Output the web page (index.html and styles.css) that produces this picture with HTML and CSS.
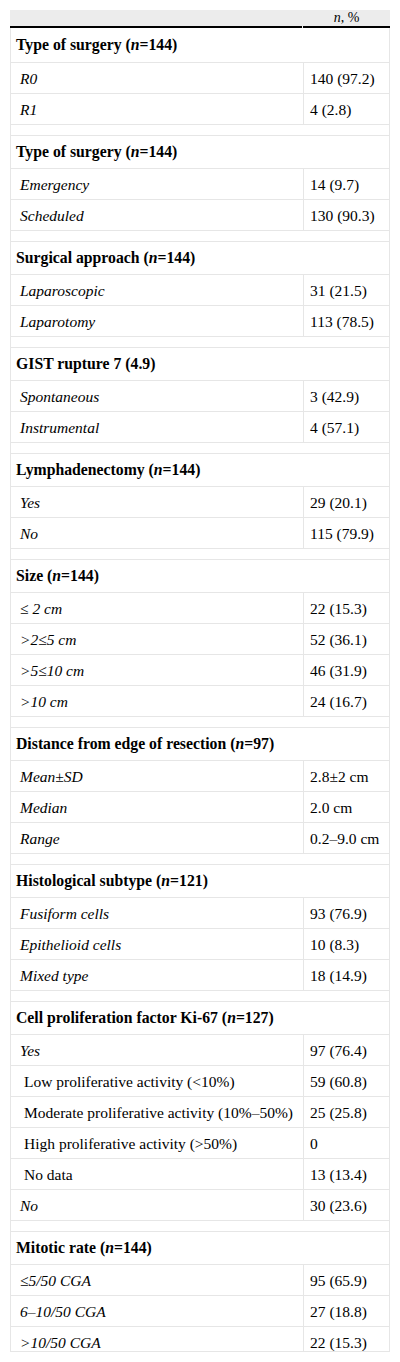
FILE: index.html
```html
<!DOCTYPE html>
<html lang="en">
<head>
<meta charset="utf-8">
<title>Surgical and histological characteristics</title>
<link rel="stylesheet" href="styles.css">
</head>
<body>
<div class="frame">
<table class="stats">
<colgroup><col class="c-label"><col class="c-value"></colgroup>
<thead>
<tr><th class="h-blank"></th><th class="h-n"><i>n</i>, %</th></tr>
</thead>
<tbody>
<tr class="group first"><td colspan="2">Type of surgery (<i>n</i>=144)</td></tr>
<tr><td class="lbl"><i>R0</i></td><td class="val">140 (97.2)</td></tr>
<tr><td class="lbl"><i>R1</i></td><td class="val">4 (2.8)</td></tr>
<tr class="gap"><td colspan="2"><div class="gap-fill"></div></td></tr>

<tr class="group"><td colspan="2">Type of surgery (<i>n</i>=144)</td></tr>
<tr><td class="lbl"><i>Emergency</i></td><td class="val">14 (9.7)</td></tr>
<tr><td class="lbl"><i>Scheduled</i></td><td class="val">130 (90.3)</td></tr>
<tr class="gap"><td colspan="2"><div class="gap-fill"></div></td></tr>

<tr class="group"><td colspan="2">Surgical approach (<i>n</i>=144)</td></tr>
<tr><td class="lbl"><i>Laparoscopic</i></td><td class="val">31 (21.5)</td></tr>
<tr><td class="lbl"><i>Laparotomy</i></td><td class="val">113 (78.5)</td></tr>
<tr class="gap"><td colspan="2"><div class="gap-fill"></div></td></tr>

<tr class="group"><td colspan="2">GIST rupture 7 (4.9)</td></tr>
<tr><td class="lbl"><i>Spontaneous</i></td><td class="val">3 (42.9)</td></tr>
<tr><td class="lbl"><i>Instrumental</i></td><td class="val">4 (57.1)</td></tr>
<tr class="gap"><td colspan="2"><div class="gap-fill"></div></td></tr>

<tr class="group"><td colspan="2">Lymphadenectomy (<i>n</i>=144)</td></tr>
<tr><td class="lbl"><i>Yes</i></td><td class="val">29 (20.1)</td></tr>
<tr><td class="lbl"><i>No</i></td><td class="val">115 (79.9)</td></tr>
<tr class="gap"><td colspan="2"><div class="gap-fill"></div></td></tr>

<tr class="group"><td colspan="2">Size (<i>n</i>=144)</td></tr>
<tr><td class="lbl"><i>≤ 2 cm</i></td><td class="val">22 (15.3)</td></tr>
<tr><td class="lbl"><i>&gt;2≤5 cm</i></td><td class="val">52 (36.1)</td></tr>
<tr><td class="lbl"><i>&gt;5≤10 cm</i></td><td class="val">46 (31.9)</td></tr>
<tr><td class="lbl"><i>&gt;10 cm</i></td><td class="val">24 (16.7)</td></tr>
<tr class="gap"><td colspan="2"><div class="gap-fill"></div></td></tr>

<tr class="group"><td colspan="2">Distance from edge of resection (<i>n</i>=97)</td></tr>
<tr><td class="lbl"><i>Mean±SD</i></td><td class="val">2.8±2 cm</td></tr>
<tr><td class="lbl"><i>Median</i></td><td class="val">2.0 cm</td></tr>
<tr><td class="lbl"><i>Range</i></td><td class="val">0.2–9.0 cm</td></tr>
<tr class="gap"><td colspan="2"><div class="gap-fill"></div></td></tr>

<tr class="group"><td colspan="2">Histological subtype (<i>n</i>=121)</td></tr>
<tr><td class="lbl"><i>Fusiform cells</i></td><td class="val">93 (76.9)</td></tr>
<tr><td class="lbl"><i>Epithelioid cells</i></td><td class="val">10 (8.3)</td></tr>
<tr><td class="lbl"><i>Mixed type</i></td><td class="val">18 (14.9)</td></tr>
<tr class="gap"><td colspan="2"><div class="gap-fill"></div></td></tr>

<tr class="group"><td colspan="2">Cell proliferation factor Ki-67 (<i>n</i>=127)</td></tr>
<tr><td class="lbl"><i>Yes</i></td><td class="val">97 (76.4)</td></tr>
<tr><td class="lbl sub">Low proliferative activity (&lt;10%)</td><td class="val">59 (60.8)</td></tr>
<tr><td class="lbl sub">Moderate proliferative activity (10%–50%)</td><td class="val">25 (25.8)</td></tr>
<tr><td class="lbl sub">High proliferative activity (&gt;50%)</td><td class="val">0</td></tr>
<tr><td class="lbl sub">No data</td><td class="val">13 (13.4)</td></tr>
<tr><td class="lbl"><i>No</i></td><td class="val">30 (23.6)</td></tr>
<tr class="gap"><td colspan="2"><div class="gap-fill"></div></td></tr>

<tr class="group"><td colspan="2">Mitotic rate (<i>n</i>=144)</td></tr>
<tr><td class="lbl"><i>≤5/50 CGA</i></td><td class="val">95 (65.9)</td></tr>
<tr><td class="lbl"><i>6–10/50 CGA</i></td><td class="val">27 (18.8)</td></tr>
<tr><td class="lbl"><i>&gt;10/50 CGA</i></td><td class="val">22 (15.3)</td></tr>
</tbody>
</table>
</div>
</body>
</html>
```

FILE: styles.css
```css
html, body {
  margin: 0;
  padding: 0;
  background: #ffffff;
}

body {
  font-family: "Liberation Serif", "Times New Roman", Times, "DejaVu Serif", serif;
  color: #000000;
}

.frame {
  margin: 10px 0 0 10px;
  width: 380px;
  height: 1341px;
  overflow: hidden;
  border-bottom: 1px solid #e6e6e6;
}

.stats {
  width: 380px;
  table-layout: fixed;
  border-collapse: separate;
  border-spacing: 0;
  font-family: "Liberation Serif", "Times New Roman", Times, "DejaVu Serif", serif;
  font-size: 15.5px;
}

.stats th,
.stats td,
.stats i,
.stats b {
  font-family: "Liberation Serif", "Times New Roman", Times, "DejaVu Serif", serif;
}

.c-label { width: 293px; }
.c-value { width: 87px; }

.stats th {
  height: 18px;
  padding: 0 0 2px 0;
  line-height: 16px;
  font-weight: normal;
  font-size: 14px;
  background: linear-gradient(#000000, #000000) left bottom / calc(100% - 1px) 2px no-repeat, #ececec;
  box-sizing: border-box;
}

.stats th.h-n {
  text-align: center;
  background: linear-gradient(#000000, #000000) left bottom / 100% 2px no-repeat, #ececec;
}

.stats td {
  padding: 6px 6px 4px;
  line-height: 20px;
  border-bottom: 1px solid #e6e6e6;
  border-left: 1px solid #e6e6e6;
  white-space: nowrap;
  vertical-align: middle;
}

.stats td:last-child {
  border-right: 1px solid #e6e6e6;
}

.stats td.lbl {
  padding-left: 9px;
}

.stats td.lbl.sub {
  padding-left: 13px;
}

.stats td.val {
  padding-left: 6px;
}

.group td {
  font-weight: bold;
  font-size: 15.75px;
  padding-top: 6px;
  padding-bottom: 6px;
  padding-left: 5px;
}

.group.first td {
  padding-top: 7px;
  padding-bottom: 7px;
}

.gap td {
  padding: 0;
  line-height: 0;
}

.gap-fill {
  height: 10px;
}
```
